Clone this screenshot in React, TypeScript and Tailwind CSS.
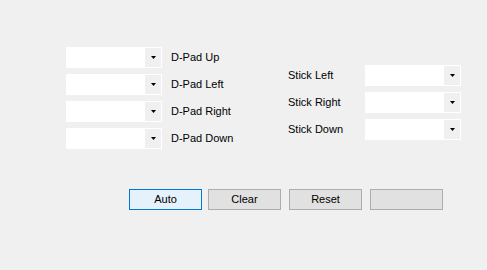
import React from "react";

function Combo() {
  return (
    <div className="flex h-[21px] w-[96px] bg-white p-px">
      <div className="flex-1" />
      <div className="flex w-[16px] items-center justify-center bg-[#f0f0f0]">
        <svg width="5" height="3" viewBox="0 0 5 3">
          <polygon points="0,0 5,0 2.5,3" fill="#000" />
        </svg>
      </div>
    </div>
  );
}

function Btn({ label, focused }: { label?: string; focused?: boolean }) {
  return (
    <button
      className={
        focused
          ? "h-[21px] w-[73px] border border-[#0078d7] bg-[#e5f1fb] text-[11px] text-black"
          : "h-[21px] w-[73px] border border-[#adadad] bg-[#e1e1e1] text-[11px] text-black"
      }
    >
      {label}
    </button>
  );
}

const leftRows = ["D-Pad Up", "D-Pad Left", "D-Pad Right", "D-Pad Down"];
const rightRows = ["Stick Left", "Stick Right", "Stick Down"];

export default function App() {
  return (
    <div
      className="h-[270px] w-[487px] bg-[#f0f0f0] text-[11px] text-black"
      style={{ fontFamily: '"Liberation Sans", Arial, sans-serif' }}
    >
      <div className="flex pl-[66px] pt-[47px]">
        <div className="flex w-[221px] flex-col gap-[6px]">
          {leftRows.map((r) => (
            <div key={r} className="flex items-center">
              <Combo />
              <span className="ml-[9px]">{r}</span>
            </div>
          ))}
        </div>
        <div className="mt-[18px] flex flex-col gap-[6px]">
          {rightRows.map((r) => (
            <div key={r} className="flex items-center">
              <span className="w-[78px] pl-px">{r}</span>
              <Combo />
            </div>
          ))}
        </div>
      </div>
      <div className="mt-[40px] flex pl-[129px]">
        <Btn label="Auto" focused />
        <div className="ml-[6px]">
          <Btn label="Clear" />
        </div>
        <div className="ml-[8px]">
          <Btn label="Reset" />
        </div>
        <div className="ml-[8px]">
          <Btn />
        </div>
      </div>
    </div>
  );
}
